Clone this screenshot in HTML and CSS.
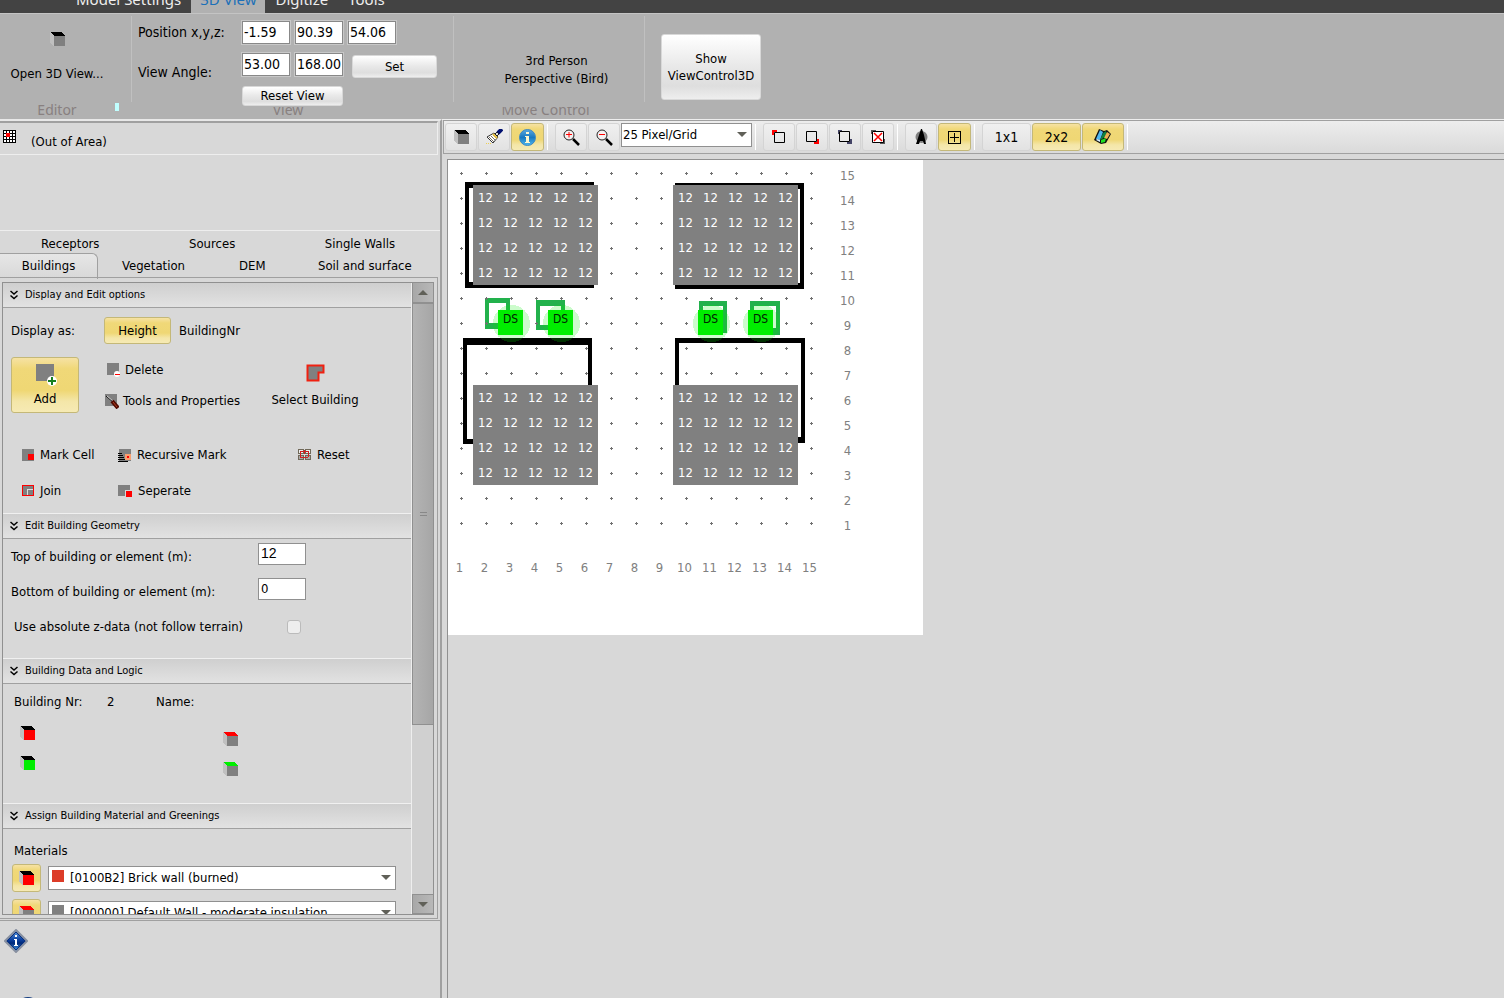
FILE: index.html
```
<!DOCTYPE html>
<html lang="en">

<head>
    <meta charset="UTF-8">
    <meta name="viewport" content="width=device-width, initial-scale=1.0">
    <title>3D View</title>
    <link rel="stylesheet" href="styles.css">
</head>

<body>
    <!-- shared icons -->
    <svg class="defs" width="0" height="0" aria-hidden="true">
        <symbol id="cube" viewBox="0 0 15 14">
            <path class="cube-side" d="M0 0 4 4V14H3L0 11Z" />
            <path class="cube-top" d="M0 0H11L15 4H4Z" />
            <path class="cube-front" d="M4 4H15V14H4Z" />
        </symbol>
        <symbol id="chev" viewBox="0 0 8 10">
            <path d="M.5 1 4 4 7.500 1M.5 5.500 4 8.500 7.500 5.500" fill="none" stroke="#000" stroke-width="1.5" />
        </symbol>
        <symbol id="lens" viewBox="0 0 17 17">
            <path d="M10 10 16 16" stroke="#000" stroke-width="2.5" />
            <circle cx="6" cy="6" r="5" fill="#f4f0f0" stroke="#222" />
        </symbol>
    </svg>

    <!-- ribbon tabs -->
    <nav class="tabs">
        <a href="#">Model Settings</a>
        <a href="#" class="on">3D View</a>
        <a href="#">Digitize</a>
        <a href="#">Tools</a>
    </nav>

    <!-- ribbon -->
    <header class="ribbon">
        <section class="group editor">
            <button class="open3d">
                <svg class="cube" width="15" height="14"><use href="#cube" /></svg>
                <span>Open 3D View...</span>
            </button>
            <i class="mark"></i>
            <h2>Editor</h2>
        </section>
        <section class="group view">
            <div class="viewgrid">
                <label for="px">Position x,y,z:</label>
                <input id="px" value="-1.59">
                <input aria-label="Position y" value="90.39">
                <input aria-label="Position z" value="54.06">
                <label for="va" class="low">View Angle:</label>
                <input id="va" value="53.00">
                <input aria-label="View angle 2" value="168.00">
                <button class="btn set">Set</button>
                <button class="btn reset">Reset View</button>
            </div>
            <h2>View</h2>
        </section>
        <section class="group move">
            <p>3rd Person<br>Perspective (Bird)</p>
            <h2>Move Control</h2>
        </section>
        <button class="btn show">Show<br>ViewControl3D</button>
    </header>

    <main>
        <!-- left panel -->
        <aside>
            <div class="status">
                <svg width="13" height="13">
                    <path fill="#fff" d="M0 0H13V13H0Z" />
                    <path d="M0 0H13V1H0ZM0 3H13V4H0ZM0 6H13V7H0ZM0 9H13V10H0ZM0 12H13V13H0ZM0 0H1V13H0ZM3 0H4V13H3ZM6 0H7V13H6ZM9 0H10V13H9ZM12 0H13V13H12Z" />
                    <path fill="red" d="M3 3H7V7H3Z" />
                </svg>
                <span>(Out of Area)</span>
            </div>

            <nav class="ptabs">
                <div class="row1">
                    <a href="#">Receptors</a><a href="#">Sources</a><a href="#">Single Walls</a>
                </div>
                <div class="row2">
                    <a href="#" class="on">Buildings</a><a href="#">Vegetation</a><a href="#">DEM</a><a href="#">Soil and surface</a>
                </div>
            </nav>

            <div class="page">
                <div class="scroller">
                    <div class="content">
                        <h3><svg width="8" height="10"><use href="#chev" /></svg>Display and Edit options</h3>
                        <div class="sec options">
                            <div class="line">
                                <span class="lab">Display as:</span>
                                <button class="gold height">Height</button>
                                <button class="flat">BuildingNr</button>
                            </div>
                            <div class="edit">
                                <button class="gold add">
                                    <svg width="18" height="23" overflow="visible">
                                        <path fill="#808080" d="M0 0H18V17H0Z" />
                                        <circle cx="16" cy="17" r="5" fill="#fff" />
                                        <path d="M12 17H20M16 13V21" stroke="#168020" stroke-width="2" />
                                    </svg>
                                    <span>Add</span>
                                </button>
                                <div class="mid">
                                    <button class="flat del">
                                        <svg width="14" height="14">
                                            <path fill="#808080" d="M0 0H12V12H0Z" />
                                            <circle cx="10" cy="11" r="3" fill="#fff" />
                                            <path fill="red" d="M8 11H13V12H8Z" />
                                        </svg>Delete</button>
                                    <button class="flat">
                                        <svg width="14" height="15">
                                            <path fill="#808080" d="M0 0H12V12H0Z" />
                                            <path d="M1 2 8 8" stroke="#111" />
                                            <path d="M2 2 8 7" stroke="#ccc" />
                                            <path d="M7 7 13 14" stroke="#500800" stroke-width="4" />
                                            <path d="M8 8 12 13" stroke="#b04020" stroke-width="1" />
                                        </svg>Tools and Properties</button>
                                </div>
                                <button class="flat sel">
                                    <svg width="19" height="18">
                                        <path d="M1.500 1.500H17.500V8.500H12.500V16.500H1.500Z" fill="#808080" stroke="#f02010" stroke-width="2" />
                                    </svg>
                                    <span>Select Building</span>
                                </button>
                            </div>
                            <div class="marks">
                                <button class="flat">
                                    <svg width="12" height="12" shape-rendering="crispEdges">
                                        <path fill="#808080" d="M0 0H12V12H0Z" />
                                        <path fill="red" d="M6 5H12V11H6Z" />
                                    </svg>Mark Cell</button>
                                <button class="flat">
                                    <svg width="13" height="13" shape-rendering="crispEdges">
                                        <path fill="#808080" d="M1 0H13V12H1Z" />
                                        <path d="M0 4H4V5H0ZM0 6H5V7H0ZM0 8H6V9H0ZM0 10H8V11H0ZM0 12H10V13H0Z" />
                                        <path fill="#f8a070" d="M7 5H13V11H7Z" />
                                        <path fill="red" d="M9 7H11V9H9Z" />
                                    </svg>Recursive Mark</button>
                                <button class="flat">
                                    <svg width="13" height="12" shape-rendering="crispEdges">
                                        <path fill="#706858" d="M0 0H6V5H0ZM7 0H13V5H7ZM0 6H6V11H0ZM7 6H13V11H7Z" />
                                        <path fill="#eee" d="M1 1H5V4H1ZM8 1H12V4H8Z" />
                                        <path fill="#aaa" d="M1 7H5V10H1ZM8 7H12V10H8Z" />
                                        <path fill="#d02020" d="M2 2H6V3H2ZM7 2H11V3H7ZM2 8H10V9H2ZM2 2H3V8H2ZM10 3H11V8H10ZM6 1H7V5H6Z" />
                                    </svg>Reset</button>
                                <button class="flat">
                                    <svg width="12" height="12" shape-rendering="crispEdges">
                                        <path fill="red" d="M0 0H12V11H0Z" />
                                        <path fill="#808080" d="M1 1H11V10H1Z" />
                                        <path fill="#ddd" d="M5 4H11V5H6V10H5Z" />
                                    </svg>Join</button>
                                <button class="flat">
                                    <svg width="14" height="13" shape-rendering="crispEdges">
                                        <path fill="#808080" d="M0 0H12V11H0Z" />
                                        <path fill="#d8d8d8" d="M7 5H14V13H7Z" />
                                        <path fill="red" d="M8 6H14V12H8Z" />
                                    </svg>Seperate</button>
                            </div>
                        </div>

                        <h3><svg width="8" height="10"><use href="#chev" /></svg>Edit Building Geometry</h3>
                        <div class="sec geo">
                            <label for="top">Top of building or element (m):</label>
                            <input id="top" class="arial" value="12">
                            <label for="bottom">Bottom of building or element (m):</label>
                            <input id="bottom" value="0">
                            <label for="abs" class="abs">Use absolute z-data (not follow terrain)</label>
                            <input id="abs" type="checkbox">
                        </div>

                        <h3><svg width="8" height="10"><use href="#chev" /></svg>Building Data and Logic</h3>
                        <div class="sec logic">
                            <div class="nr"><span>Building Nr:</span><span>2</span><span>Name:</span></div>
                            <div class="cubes">
                                <svg class="cube red" width="15" height="14"><use href="#cube" /></svg>
                                <svg class="cube redtop" width="15" height="14"><use href="#cube" /></svg>
                                <svg class="cube green" width="15" height="14"><use href="#cube" /></svg>
                                <svg class="cube greentop" width="15" height="14"><use href="#cube" /></svg>
                            </div>
                        </div>

                        <h3><svg width="8" height="10"><use href="#chev" /></svg>Assign Building Material and Greenings</h3>
                        <div class="sec mats">
                            <p>Materials</p>
                            <div class="mat">
                                <button class="gold" aria-label="Wall material"><svg class="cube red" width="15" height="14"><use href="#cube" /></svg></button>
                                <div class="pick color brick">
                                    <select aria-label="Wall material list"><option>[0100B2] Brick wall (burned)</option></select>
                                </div>
                            </div>
                            <div class="mat">
                                <button class="gold" aria-label="Roof material"><svg class="cube redtop" width="15" height="14"><use href="#cube" /></svg></button>
                                <div class="pick color">
                                    <select aria-label="Roof material list"><option>[000000] Default Wall - moderate insulation</option></select>
                                </div>
                            </div>
                        </div>
                    </div>
                    <div class="bar">
                        <button class="up" aria-label="Scroll up"></button>
                        <div class="thumb"></div>
                        <div class="track"></div>
                        <button class="down" aria-label="Scroll down"></button>
                    </div>
                </div>
            </div>

            <div class="info">
                <svg width="24" height="24">
                    <defs>
                        <linearGradient id="dia" x2="0" y2="1">
                            <stop offset="0" stop-color="#6aa6e6" />
                            <stop offset=".45" stop-color="#0a3fa0" />
                            <stop offset=".6" stop-color="#002878" />
                            <stop offset="1" stop-color="#58b4ff" />
                        </linearGradient>
                    </defs>
                    <path d="M12 1 23 12 12 23 1 12Z" fill="url(#dia)" stroke="#8890a0" stroke-width="2" />
                    <path d="M12 3 21 12 12 21 3 12Z" fill="none" stroke="#083080" />
                    <path d="M11 6H13V8H11ZM10 10H13V16H14V17H10V16H11V11H10Z" fill="#fff" />
                </svg>
                <i></i>
            </div>
        </aside>

        <!-- right side -->
        <section class="work">
            <div class="toolbar">
                <button aria-label="3D"><svg class="cube" width="15" height="14"><use href="#cube" /></svg></button>
                <button aria-label="Brush">
                    <svg width="17" height="16">
                        <path d="M1 8 8 4 12 8 7 14Z" fill="#fff" stroke="#333" />
                        <path d="M3 8 8 13M5 7 9 11M7 6 11 10" stroke="#777060" />
                        <path d="M7 5 11 9" stroke="#e8c040" stroke-width="2" />
                        <path d="M9 5 11 3 13 5 11 7Z" fill="#ddd" stroke="#222" />
                        <path d="M12 4 16 0" stroke="#001070" stroke-width="4" />
                        <path d="M0 14.500H6" stroke="#f0d050" stroke-dasharray="1 1" />
                    </svg>
                </button>
                <button class="on" aria-label="Info">
                    <svg width="17" height="17">
                        <defs>
                            <linearGradient id="ball" x2="0" y2="1">
                                <stop offset="0" stop-color="#5aa8e0" />
                                <stop offset=".5" stop-color="#1878c0" />
                                <stop offset="1" stop-color="#50b8f0" />
                            </linearGradient>
                        </defs>
                        <circle cx="8.500" cy="8.500" r="8" fill="url(#ball)" stroke="#4088c0" />
                        <path d="M7 3H10V5H7ZM6 7H10V13H11V14H6V13H7V8H6Z" fill="#fff8d0" />
                    </svg>
                </button>
                <i class="sep"></i>
                <button aria-label="Zoom in">
                    <svg width="17" height="17"><use href="#lens" /><path d="M3 5.500H9M6 3V8.500" stroke="red" /></svg>
                </button>
                <button aria-label="Zoom out">
                    <svg width="17" height="17"><use href="#lens" /><path d="M3 5.500H9" stroke="red" /></svg>
                </button>
                <div class="pick">
                    <select aria-label="Zoom"><option>25 Pixel/Grid</option></select>
                </div>
                <i class="sep"></i>
                <button aria-label="Top left corner">
                    <svg width="14" height="14"><path d="M2.500 2.500H12.500V12.500H2.500Z" fill="none" stroke="#000" /><path d="M0 0H5V2H2V5H0Z" fill="red" /></svg>
                </button>
                <button aria-label="Bottom right corner">
                    <svg width="14" height="14"><path d="M1.500 1.500H11.500V11.500H1.500Z" fill="none" stroke="#000" /><path d="M9 14V12H12V9H14V14Z" fill="red" /></svg>
                </button>
                <button aria-label="Both corners">
                    <svg width="14" height="14"><path d="M1.500 1.500H11.500V11.500H1.500Z" fill="none" stroke="#000" /><path d="M0 4V0H4V1H1V4ZM9 14V12H12V9H14V14Z" fill="#446" /></svg>
                </button>
                <button aria-label="Clear selection">
                    <svg width="14" height="14"><path d="M0 4V0H5V1H1V4ZM9 14V12H12V9H14V14Z" fill="#555" /><path d="M1.500 1.500H12.500V12.500H1.500Z" fill="#fff" stroke="#000" /><path d="M3 3 11 11M11 3 3 11" stroke="red" stroke-width="1.5" /></svg>
                </button>
                <i class="sep"></i>
                <button aria-label="North">
                    <svg width="13" height="16"><circle cx="6.500" cy="8" r="6" fill="#808080" /><path d="M6 0H7L9 6 11 15H9L8 12H5L4 15H1L4 6Z" /></svg>
                </button>
                <button class="on" aria-label="Grid">
                    <svg width="13" height="13" shape-rendering="crispEdges"><path d="M.5 .5H12.500V12.500H.5ZM2 6.500H11M6.500 2V11" fill="none" stroke="#000" /></svg>
                </button>
                <i class="sep"></i>
                <button class="wide">1x1</button>
                <button class="wide on">2x2</button>
                <button class="map on" aria-label="Map">
                    <svg width="18" height="16">
                        <path d="M5 0 10 2 13 1 17 5 12 14 7 15 0 11Z" fill="#111" />
                        <path d="M6 1 9 3 6 11 2 10Z" fill="#50b8f0" />
                        <path d="M9 4 12 2 13 6 8 10 6 11Z" fill="#108040" />
                        <path d="M13 3 16 5 13 10 10 9Z" fill="#f0b050" />
                        <path d="M7 11 12 9 11 13 7 14Z" fill="#20e020" />
                        <path d="M3 10 6 11 6 13 2 11Z" fill="#d8f0ff" />
                    </svg>
                </button>
                <i class="sep"></i>
            </div>

            <div class="area">
                <div class="sheet">
                    <svg class="plan" width="475" height="475" shape-rendering="crispEdges">
                        <defs>
                            <pattern id="dots" width="25" height="25" patternUnits="userSpaceOnUse">
                                <path d="M12 13H15V14H12ZM13 12H14V15H13Z" fill="#707070" />
                            </pattern>
                        </defs>
                        <!-- outlines -->
                        <path d="M17 22H146V28H21V122H146V128H17Z" />
                        <path d="M227 23H356V129H227V123H352V29H227Z" />
                        <path d="M15 178H144V230H140V185H19V279H30V284H15Z" />
                        <path d="M227 178H357V283H340V277H353V183H231V230H227Z" />
                        <g fill="#22b14c" fill-rule="evenodd">
                            <path d="M37 138H62V169H37ZM41 143V163H58V143Z" />
                            <path d="M88 140H117V170H88ZM92 146V165H113V146Z" />
                            <path d="M251 141H279V173H251ZM255 146V167H275V146Z" />
                            <path d="M302 141H332V175H302ZM306 146V168H328V146Z" />
                        </g>
                        <rect width="375" height="375" fill="url(#dots)" />
                        <g fill="#00f000" fill-opacity=".2">
                            <circle cx="63.500" cy="163.500" r="18.500" />
                            <circle cx="113.500" cy="163.500" r="18.500" />
                            <circle cx="263.500" cy="163.500" r="18.500" />
                            <circle cx="313.500" cy="163.500" r="18.500" />
                        </g>
                    </svg>

                    <div class="house tl">
                        <b>12</b><b>12</b><b>12</b><b>12</b><b>12</b>
                        <b>12</b><b>12</b><b>12</b><b>12</b><b>12</b>
                        <b>12</b><b>12</b><b>12</b><b>12</b><b>12</b>
                        <b>12</b><b>12</b><b>12</b><b>12</b><b>12</b>
                    </div>
                    <div class="house tr">
                        <b>12</b><b>12</b><b>12</b><b>12</b><b>12</b>
                        <b>12</b><b>12</b><b>12</b><b>12</b><b>12</b>
                        <b>12</b><b>12</b><b>12</b><b>12</b><b>12</b>
                        <b>12</b><b>12</b><b>12</b><b>12</b><b>12</b>
                    </div>
                    <div class="house bl">
                        <b>12</b><b>12</b><b>12</b><b>12</b><b>12</b>
                        <b>12</b><b>12</b><b>12</b><b>12</b><b>12</b>
                        <b>12</b><b>12</b><b>12</b><b>12</b><b>12</b>
                        <b>12</b><b>12</b><b>12</b><b>12</b><b>12</b>
                    </div>
                    <div class="house br">
                        <b>12</b><b>12</b><b>12</b><b>12</b><b>12</b>
                        <b>12</b><b>12</b><b>12</b><b>12</b><b>12</b>
                        <b>12</b><b>12</b><b>12</b><b>12</b><b>12</b>
                        <b>12</b><b>12</b><b>12</b><b>12</b><b>12</b>
                    </div>

                    <div class="tree t1">DS</div>
                    <div class="tree t2">DS</div>
                    <div class="tree t3">DS</div>
                    <div class="tree t4">DS</div>

                    <div class="rows">
                        <b>15</b><b>14</b><b>13</b><b>12</b><b>11</b><b>10</b><b>9</b><b>8</b><b>7</b><b>6</b><b>5</b><b>4</b><b>3</b><b>2</b><b>1</b>
                    </div>
                    <div class="cols">
                        <b>1</b><b>2</b><b>3</b><b>4</b><b>5</b><b>6</b><b>7</b><b>8</b><b>9</b><b>10</b><b>11</b><b>12</b><b>13</b><b>14</b><b>15</b>
                    </div>
                </div>
            </div>
        </section>
    </main>
</body>

</html>
```
FILE: styles.css
```
* {
    box-sizing: border-box;
}

html,
body {
    margin: 0;
    padding: 0;
    height: 100%;
}

body {
    display: flex;
    flex-direction: column;
    overflow: hidden;
    background: #d8d8d8;
    color: #000;
    font: 13px/16px "DejaVu Sans Condensed", "Noto Sans", sans-serif;
}

a {
    color: inherit;
    text-decoration: none;
}

h2,
h3,
p {
    margin: 0;
    font-weight: normal;
}

b,
i {
    font-weight: normal;
    font-style: normal;
}

svg {
    display: block;
    flex: none;
}

button,
input,
select {
    margin: 0;
    padding: 0;
    border: 0;
    border-radius: 0;
    color: inherit;
    font: inherit;
}

.defs {
    position: absolute;
}

/* cube icon colours */
.cube {
    shape-rendering: crispEdges;
    --top: #000;
    --front: #808080;
}

.cube-side {
    fill: #c0c0c0;
}

.cube-top {
    fill: var(--top);
}

.cube-front {
    fill: var(--front);
}

.red {
    --front: #f00;
}

.green {
    --front: #0e0;
}

.redtop {
    --top: #f00;
}

.greentop {
    --top: #0e0;
}

/* ribbon tabs */
.tabs {
    display: flex;
    align-items: flex-end;
    flex: none;
    height: 13px;
    padding-left: 66px;
    overflow: hidden;
    background: #434343;
    color: #eee;
    font: 15px/28px "Noto Sans", sans-serif;
}

.tabs a {
    padding: 0 10px;
}

.tabs .on {
    padding: 0 9px;
    background: #b1b1b1;
    color: #1c70b8;
}

/* ribbon */
.ribbon {
    display: flex;
    flex: none;
    height: 106px;
    border-top: 1px solid #c4c4c4;
    background: #b1b1b1;
}

.group {
    position: relative;
    display: flex;
    flex-direction: column;
}

/* divider that stops above the caption */
.group::after {
    content: "";
    position: absolute;
    top: 2px;
    right: 0;
    width: 1px;
    height: 86px;
    background: #c0c0c0;
}

.group h2 {
    height: 12px;
    margin-top: auto;
    overflow: hidden;
    color: #888080;
    font: 14px/5px "Noto Sans", sans-serif;
    text-align: center;
}

.editor {
    width: 132px;
}

.editor h2 {
    height: 20px;
    padding-right: 18px;
    line-height: 21px;
}

.open3d {
    display: flex;
    flex-direction: column;
    align-items: center;
    gap: 20px;
    padding: 18px 18px 0 0;
    background: none;
}

.mark {
    position: absolute;
    right: 13px;
    bottom: 8px;
    width: 4px;
    height: 8px;
    background: #c0ffff;
}

.view {
    width: 322px;
}

.view h2 {
    padding-right: 10px;
}

.viewgrid {
    display: grid;
    grid-template-columns: 99px 48px 48px 48px 36px;
    grid-template-rows: 24px 25px 20px;
    gap: 8px 5px;
    padding: 7px 0 0 6px;
}

.viewgrid label {
    grid-column: 1;
    padding-top: 3px;
    font-size: 14px;
}

.viewgrid .low {
    padding-top: 11px;
}

.viewgrid input {
    width: 48px;
    height: 23px;
    border: 1px solid #888;
    outline: 1px solid #c8c8c8;
    padding: 0 0 2px 1px;
    background: #fff;
    font-size: 14px;
}

.btn {
    border: 1px solid #d8d8d8;
    border-radius: 3px;
    background: linear-gradient(#fff, #e8e8e8 50%, #dedede 80%, #eee);
}

.set {
    grid-column: 4 / 6;
    margin: 2px 0 0 4px;
}

.reset {
    position: relative;
    z-index: 1;
    grid-column: 2 / 4;
}

.move {
    width: 191px;
}

.move p {
    padding: 38px 0 0 14px;
    line-height: 18px;
    text-align: center;
}

.move h2 {
    padding-right: 8px;
}

.show {
    width: 100px;
    height: 66px;
    margin: 20px 0 0 16px;
    line-height: 17px;
}

main {
    display: flex;
    flex: 1;
    min-height: 0;
}

/* left panel */
aside {
    display: flex;
    flex-direction: column;
    flex: none;
    width: 442px;
    border-top: 2px solid #e8e8e8;
    border-right: 2px solid #a0a0a0;
}

.status {
    display: flex;
    gap: 15px;
    height: 34px;
    margin: 0 2px 0 0;
    padding: 7px 0 0 3px;
    border-top: 2px solid #a0a0a0;
    border-right: 1px solid #eee;
    border-bottom: 1px solid #eee;
}

.status span {
    padding-top: 4px;
}

.ptabs {
    margin-top: 75px;
    border-top: 1px solid #eee;
}

.row1 {
    display: flex;
    justify-content: space-between;
    height: 22px;
    padding: 5px 45px 0 41px;
}

.row2 {
    display: grid;
    grid-template-columns: 122px 117px 79px 1fr;
    align-items: center;
    height: 24px;
}

.row2 .on {
    width: 98px;
    height: 26px;
    border: 1px solid #a0a0a0;
    border-width: 1px 1px 0 0;
    border-radius: 0 6px 0 0;
    background: linear-gradient(#e6e6e6, #d8d8d8);
    line-height: 23px;
    text-align: center;
}

.page {
    flex: 1;
    min-height: 0;
    margin-right: 2px;
    padding: 4px 3px 3px 2px;
    border: 1px solid #a0a0a0;
    border-left: 0;
}

.scroller {
    display: flex;
    height: 100%;
    border: 1px solid #909090;
    overflow: hidden;
}

.content {
    flex: 1;
    border-right: 1px solid #eee;
    overflow: hidden;
}

.content h3 {
    display: flex;
    align-items: center;
    gap: 7px;
    height: 25px;
    padding-left: 7px;
    border-bottom: 1px solid #a0a0a0;
    background: linear-gradient(#cfcfcf, #e2e2e2);
    font-size: 11px;
}

.sec {
    border-bottom: 1px solid #f0f0f0;
}

.flat {
    display: flex;
    align-items: center;
    gap: 6px;
    background: none;
    white-space: nowrap;
}

.gold {
    border: 1px solid #c4b878;
    border-radius: 3px;
    background: linear-gradient(#f6e2a4, #f0d878 20%, #efd774 60%, #f4e6a8 80%, #f6eab4);
}

.options {
    height: 206px;
    padding: 9px 8px 0;
}

.line {
    display: flex;
    align-items: center;
    gap: 8px;
}

.lab {
    width: 85px;
}

.height {
    width: 67px;
    height: 27px;
}

.edit {
    display: grid;
    grid-template-columns: 68px 141px 86px;
    column-gap: 26px;
    margin-top: 13px;
}

.add {
    display: flex;
    flex-direction: column;
    align-items: center;
    gap: 4px;
    height: 56px;
    padding-top: 6px;
}

.mid {
    padding-top: 5px;
}

.mid .flat {
    gap: 4px;
    margin-bottom: 15px;
}

.mid .del {
    padding-left: 2px;
}

.sel {
    flex-direction: column;
    gap: 10px;
    padding-top: 7px;
}

.marks {
    display: grid;
    grid-template-columns: 96px 180px 60px;
    row-gap: 20px;
    margin: 23px 0 0 11px;
}

.geo {
    display: grid;
    grid-template-columns: 247px 48px;
    grid-auto-rows: 22px;
    row-gap: 13px;
    height: 120px;
    padding: 4px 8px 0;
    align-items: center;
}

.geo label {
    padding-top: 5px;
}

.geo input {
    height: 22px;
    padding: 0 0 2px 2px;
    border: 1px solid #909090;
    background: #fff;
}

.geo .arial {
    font: 14px "Liberation Sans", sans-serif;
}

.geo .abs {
    padding-left: 3px;
}

.geo input[type="checkbox"] {
    appearance: none;
    width: 14px;
    height: 14px;
    margin: 5px 0 0 29px;
    border: 1px solid #bbb;
    border-radius: 3px;
    background: #eee;
}

.logic {
    height: 120px;
    padding: 10px 11px;
}

.nr {
    display: grid;
    grid-template-columns: 93px 49px 1fr;
}

.cubes {
    display: grid;
    grid-template-columns: 203px 15px;
    row-gap: 16px;
    padding: 16px 6px;
}

.cubes svg:nth-child(even) {
    margin-top: 6px;
    margin-bottom: -6px;
}

.mats {
    padding: 14px 15px 0 9px;
}

.mats p {
    margin-bottom: 5px;
    padding-left: 2px;
}

.mat {
    display: flex;
    align-items: center;
    gap: 7px;
    margin-bottom: 7px;
}

.mat .gold {
    display: flex;
    align-items: center;
    justify-content: center;
    width: 29px;
    height: 28px;
}

/* drop-downs */
.pick {
    position: relative;
}

.mat .pick {
    flex: 1;
}

.pick select {
    display: block;
    appearance: none;
    width: 100%;
    height: 24px;
    padding: 0 0 1px 1px;
    border: 1px solid #909090;
    background: #fff;
}

.color select {
    padding: 0 0 0 21px;
}

/* colour sample over the drop-down */
.color::before {
    content: "";
    position: absolute;
    top: 4px;
    left: 4px;
    width: 12px;
    height: 12px;
    background: #808080;
}

.brick::before {
    background: #dc3c28;
}

/* arrows */
.pick::after,
.up::before,
.down::before {
    content: "";
    border: 5px solid transparent;
    border-top-color: #606058;
    border-bottom: 0;
}

.pick::after {
    position: absolute;
    top: 9px;
    right: 5px;
    pointer-events: none;
}

/* scroll bar */
.bar {
    display: flex;
    flex-direction: column;
    width: 21px;
    background: #d0d0d0;
}

.bar button {
    display: flex;
    align-items: center;
    justify-content: center;
    height: 20px;
    border: 1px solid #909090;
    border-width: 0 0 1px 1px;
    background: linear-gradient(90deg, #a8a8a8, #b8b8b8);
}

.up::before {
    transform: rotate(180deg);
}

.thumb {
    flex: 421;
    border: 1px solid #909090;
    border-right: 0;
    background:
        linear-gradient(#888 1px, transparent 1px 3px, #888 3px) center / 7px 4px no-repeat,
        linear-gradient(90deg, #b4b4b4, #a6a6a6);
}

.track {
    flex: 169;
}

.bar .down {
    border-top-width: 1px;
}

.info {
    flex: none;
    height: 78px;
    margin-top: 1px;
    padding: 8px 4px 0;
    border-top: 1px solid #a0a0a0;
    overflow: hidden;
}

.info i {
    display: block;
    width: 24px;
    height: 24px;
    margin: 44px 0 0 12px;
    border-radius: 50%;
    background: #123c80;
}

/* right side */
.work {
    display: flex;
    flex: 1;
    flex-direction: column;
    min-width: 0;
    padding-left: 1px;
    border-top: 1px solid #eee;
}

.toolbar {
    display: flex;
    flex: none;
    gap: 1px;
    height: 34px;
    padding: 2px 1px;
    border: 1px solid #a0a0a0;
    border-right: 0;
    background: linear-gradient(#ededed, #dadada);
}

.toolbar button {
    display: flex;
    align-items: center;
    justify-content: center;
    width: 32px;
    height: 28px;
    border: 1px solid #d4d4d4;
    border-radius: 3px;
    background: linear-gradient(#f0f0f0, #e2e2e2);
}

.toolbar .on {
    width: 33px;
    border-color: #c4b878;
    background: linear-gradient(#f6e2a4, #f0d878 20%, #efd774 60%, #f4e6a8 80%, #f6eab4);
}

.toolbar .wide {
    width: 49px;
    font-size: 14px;
}

.toolbar .map {
    width: 42px;
}

.toolbar .pick {
    width: 131px;
}

.sep {
    width: 1px;
    margin: 1px 6px 1px 2px;
    background: #fff;
}

.area {
    flex: 1;
    margin: 5px 0 0 4px;
    border: 1px solid #909090;
    border-width: 1px 0 0 1px;
    overflow: hidden;
}

.sheet {
    position: relative;
    width: 475px;
    height: 475px;
    background: #fff;
}

.house {
    position: absolute;
    display: grid;
    grid-template-columns: repeat(5, 25px);
    grid-auto-rows: 25px;
    background: #808080;
    color: #fff;
    line-height: 26px;
    text-align: center;
}

.tl {
    top: 25px;
    left: 25px;
}

.tr {
    top: 25px;
    left: 225px;
}

.bl {
    top: 225px;
    left: 25px;
}

.br {
    top: 225px;
    left: 225px;
}

.tree {
    position: absolute;
    top: 150px;
    width: 25px;
    height: 25px;
    background: #0e0;
    color: #020;
    font-size: 12px;
    line-height: 18px;
    text-align: center;
}

.t1 {
    left: 50px;
}

.t2 {
    left: 100px;
}

.t3 {
    left: 250px;
}

.t4 {
    left: 300px;
}

/* axis numbers */
.rows,
.cols {
    position: absolute;
    display: grid;
    color: #808080;
    line-height: 25px;
    text-align: center;
}

.rows {
    top: 3px;
    left: 387px;
    width: 25px;
}

.cols {
    grid-template-columns: repeat(15, 25px);
    top: 395px;
    left: -1px;
}
```
